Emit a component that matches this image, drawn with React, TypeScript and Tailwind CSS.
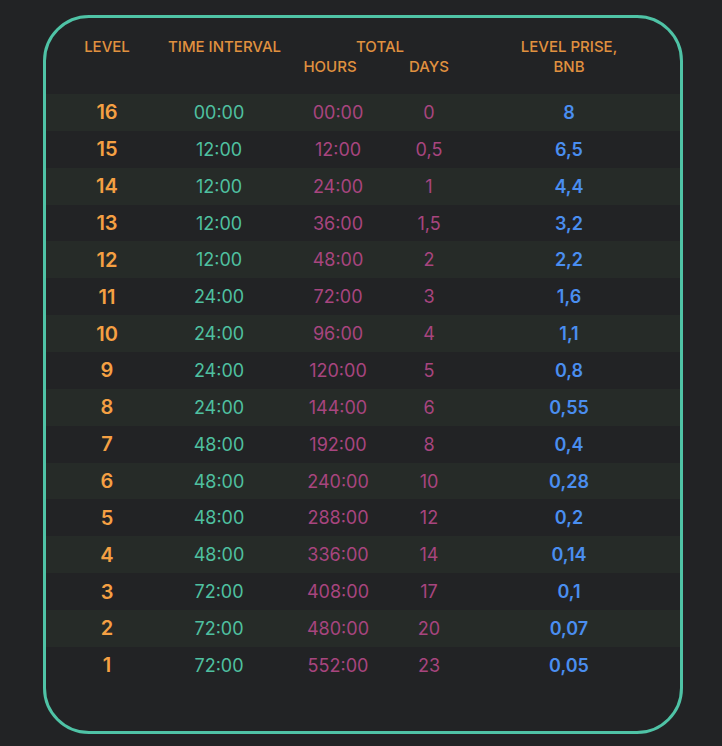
const rows = [
  { level: 16, interval: "00:00", hours: "00:00", days: "0", price: "8" },
  { level: 15, interval: "12:00", hours: "12:00", days: "0,5", price: "6,5" },
  { level: 14, interval: "12:00", hours: "24:00", days: "1", price: "4,4" },
  { level: 13, interval: "12:00", hours: "36:00", days: "1,5", price: "3,2" },
  { level: 12, interval: "12:00", hours: "48:00", days: "2", price: "2,2" },
  { level: 11, interval: "24:00", hours: "72:00", days: "3", price: "1,6" },
  { level: 10, interval: "24:00", hours: "96:00", days: "4", price: "1,1" },
  { level: 9, interval: "24:00", hours: "120:00", days: "5", price: "0,8" },
  { level: 8, interval: "24:00", hours: "144:00", days: "6", price: "0,55" },
  { level: 7, interval: "48:00", hours: "192:00", days: "8", price: "0,4" },
  { level: 6, interval: "48:00", hours: "240:00", days: "10", price: "0,28" },
  { level: 5, interval: "48:00", hours: "288:00", days: "12", price: "0,2" },
  { level: 4, interval: "48:00", hours: "336:00", days: "14", price: "0,14" },
  { level: 3, interval: "72:00", hours: "408:00", days: "17", price: "0,1" },
  { level: 2, interval: "72:00", hours: "480:00", days: "20", price: "0,07" },
  { level: 1, interval: "72:00", hours: "552:00", days: "23", price: "0,05" },
];

export default function App() {
  return (
    <div className="min-h-[746px] bg-[#222325] pt-[15px] pl-[43px] font-['Inter',sans-serif]">
      <div className="h-[719px] w-[640px] rounded-[46px] border-[3px] border-[#4fc3a6] pt-[19px]">
        {/* header */}
        <div className="whitespace-nowrap text-[15px] font-medium uppercase leading-[20px] text-[#e0913f]">
          <div className="flex">
            <div className="w-[122px] text-center">Level</div>
            <div className="w-[102px] text-center">Time interval</div>
            <div className="w-[182px] pl-[38px] text-center">Total</div>
            <div className="w-[227px] pl-[7px] text-center">Level prise,</div>
          </div>
          <div className="flex">
            <div className="w-[224px]" />
            <div className="w-[136px] pr-[16px] text-center">Hours</div>
            <div className="w-[46px] text-center">Days</div>
            <div className="w-[227px] pl-[7px] text-center">BNB</div>
          </div>
        </div>

        <div className="mt-[17px]">
          {rows.map((r, i) => (
            <div
              key={r.level}
              className={`flex h-[36.87px] items-center ${i % 2 === 0 ? "bg-[#262b28]" : ""}`}
            >
              <div className="w-[122px] text-center text-[20px] font-semibold text-[#f5a043]">{r.level}</div>
              <div className="w-[102px] text-center text-[18px] text-[#4fc0a0]">{r.interval}</div>
              <div className="w-[136px] text-center text-[18px] text-[#a8457f]">{r.hours}</div>
              <div className="w-[46px] text-center text-[18px] text-[#a8457f]">{r.days}</div>
              <div className="w-[227px] pl-[7px] text-center text-[18px] font-semibold text-[#4a8ef0]">{r.price}</div>
            </div>
          ))}
        </div>
      </div>
    </div>
  );
}
